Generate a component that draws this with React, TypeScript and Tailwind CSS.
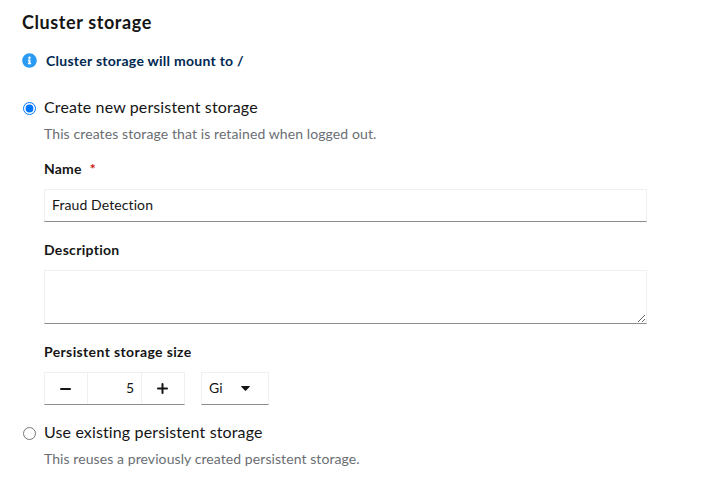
import React from "react";

type OptionProps = {
  label: string;
  hint: string;
  checked?: boolean;
  labelClass: string;
  hintClass: string;
};

function RadioOption({ label, hint, checked = false, labelClass, hintClass }: OptionProps) {
  return (
    <div>
      <label className="flex h-6 items-center gap-2">
        <input type="radio" name="storage" defaultChecked={checked} className="m-0 size-[13px] accent-[#0075ff]" />
        <span className={`-mt-0.5 whitespace-nowrap text-base leading-6 ${labelClass}`}>{label}</span>
      </label>
      <p className={`mt-1 ml-[21px] h-5 whitespace-nowrap text-sm leading-5 text-[#6a6e73] ${hintClass}`}>{hint}</p>
    </div>
  );
}

const control = "border border-[#f0f0f0] border-b-[#8a8d90] bg-white";

export default function App() {
  return (
    <main className="h-[490px] w-[712px] bg-white pt-2 pl-[22px] font-['Lato','Liberation_Sans',sans-serif] text-sm text-[#151515]">
      <h1 className="h-7 text-lg leading-7 font-bold tracking-[0.6px]">Cluster storage</h1>

      <div className="mt-[15px] flex h-5 items-center gap-[9px] font-bold text-[#002952]">
        <svg className="-mt-0.5 size-[15px]" viewBox="0 0 512 512" fill="#2b9af3" aria-hidden="true">
          <path d="M256 8C119.043 8 8 119.083 8 256c0 136.997 111.043 248 248 248s248-111.003 248-248C504 119.083 392.957 8 256 8zm0 110c23.196 0 42 18.804 42 42s-18.804 42-42 42-42-18.804-42-42 18.804-42 42-42zm56 254c0 6.627-5.373 12-12 12h-88c-6.627 0-12-5.373-12-12v-24c0-6.627 5.373-12 12-12h12v-64h-12c-6.627 0-12-5.373-12-12v-24c0-6.627 5.373-12 12-12h64c6.627 0 12 5.373 12 12v100h12c6.627 0 12 5.373 12 12v24z" />
        </svg>
        <span className="leading-5 tracking-[0.27px]">Cluster storage will mount to /</span>
      </div>

      <form className="mt-[25px] pl-px">
        <RadioOption
          checked
          label="Create new persistent storage"
          hint="This creates storage that is retained when logged out."
          labelClass="tracking-[0.13px]"
          hintClass="tracking-[0.1px]"
        />

        <div className="mt-[15px] ml-[21px] w-[603px]">
          <label className="flex h-5 gap-2 leading-5 font-bold">
            <span className="tracking-[0.2px]">Name</span>
            <span className="text-[#c9190b]">*</span>
          </label>
          <input
            type="text"
            defaultValue="Fraud Detection"
            className={`mt-2.5 block h-[33px] w-full px-[7px] pb-0.5 tracking-[0.1px] outline-none ${control}`}
          />

          <label className="mt-[18px] block h-5 leading-5 font-bold tracking-[0.3px]">Description</label>
          <textarea className={`mt-2.5 block h-[54px] w-full resize outline-none ${control}`} />

          <label className="mt-[18px] block h-5 leading-5 font-bold tracking-[0.37px]">Persistent storage size</label>
          <div className="mt-2.5 flex h-[33px] gap-4">
            <div className={`flex w-[141px] ${control}`}>
              <button type="button" aria-label="Decrease" className="flex w-[43px] items-center justify-center border-r border-[#f0f0f0] pr-px">
                <span className="h-0.5 w-[11px] rounded-sm bg-[#151515]" />
              </button>
              <input aria-label="Size" defaultValue="5" className="w-[54px] border-r border-[#f0f0f0] pr-[7px] pb-px text-right outline-none" />
              <button type="button" aria-label="Increase" className="flex flex-1 items-center justify-center pr-0.5">
                <svg className="size-[11px]" viewBox="0 0 11 11" fill="none" stroke="#151515" strokeWidth="2" strokeLinecap="round" aria-hidden="true">
                  <path d="M5.5 1v9M1 5.5h9" />
                </svg>
              </button>
            </div>
            <button type="button" className={`flex w-[68px] items-center px-[7px] pb-px ${control}`}>
              <span className="tracking-[0.2px]">Gi</span>
              <svg className="mr-[11px] ml-auto h-[5px] w-[9px]" viewBox="0 0 9 5" fill="#151515" aria-hidden="true">
                <path d="M.7 0h7.6q1 .1.4.8L5.1 4.6q-.6.6-1.2 0L.3.8Q-.3.1.7 0Z" />
              </svg>
            </button>
          </div>
        </div>

        <div className="mt-4">
          <RadioOption
            label="Use existing persistent storage"
            hint="This reuses a previously created persistent storage."
            labelClass="tracking-[0.13px]"
            hintClass="tracking-[0.08px]"
          />
        </div>
      </form>
    </main>
  );
}
